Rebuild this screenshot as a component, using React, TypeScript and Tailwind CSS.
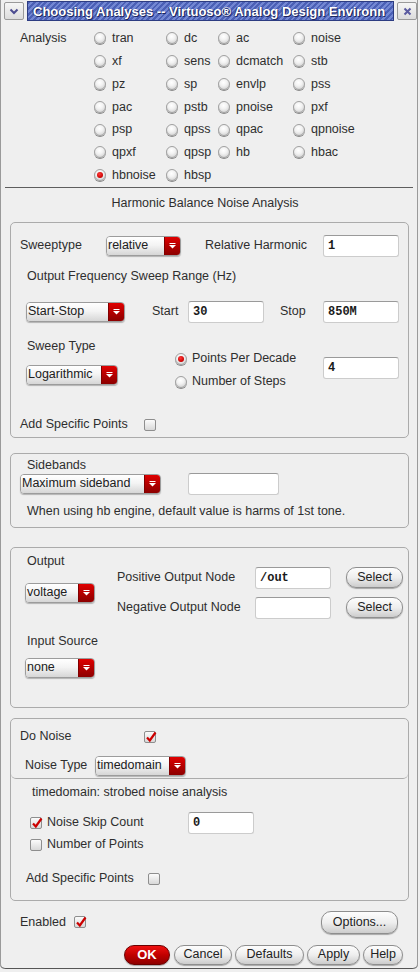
import React from "react";

const Radio = ({ checked = false }: { checked?: boolean }) => (
  <span className="relative inline-flex w-[12px] h-[12px] shrink-0 items-center justify-center rounded-full border border-[#a0a0a0] bg-[radial-gradient(circle_at_45%_35%,#ffffff_0%,#f2f2f2_40%,#c6c6c6_100%)] shadow-[0_1px_0_#8a8a8a]">
    {checked && (
      <span className="w-[6px] h-[6px] rounded-full bg-[radial-gradient(circle_at_40%_35%,#ff3a3a,#c80000_70%,#900000)]" />
    )}
  </span>
);

const Check = ({ checked = false }: { checked?: boolean }) => (
  <span className="relative inline-block w-[12px] h-[12px] shrink-0 border border-[#8e8e8e] rounded-[2px] bg-[linear-gradient(#fbfbfb,#d8d8d8)]">
    {checked && (
      <svg className="absolute left-[0px] top-[-2px]" width="12" height="13" viewBox="0 0 12 13">
        <path d="M2 7.5 L4.8 10.5 L10.5 2.5" stroke="#cc0000" strokeWidth="2.2" fill="none" />
      </svg>
    )}
  </span>
);

const Dropdown = ({ label, w }: { label: string; w: string }) => (
  <div className={`${w} h-[20px] shrink-0 flex rounded-[4px] border border-[#9c9c9c] overflow-hidden shadow-[0_1px_1px_rgba(0,0,0,0.25)]`}>
    <div className="flex-1 flex items-center pl-[1px] bg-[linear-gradient(#ffffff,#f4f4f4_45%,#d6d6d6)] text-[#202020] whitespace-nowrap overflow-hidden">
      {label}
    </div>
    <div className="w-[16px] flex items-center justify-center bg-[linear-gradient(#e00000,#b00000_55%,#8c0000)] border-l border-[#800000]">
      <svg width="7" height="6" viewBox="0 0 7 6">
        <path d="M0.5 0.5h6" stroke="#fff" strokeWidth="1" />
        <path d="M0 2h7L3.5 5.5z" fill="#fff" />
      </svg>
    </div>
  </div>
);

const Field = ({ value = "", w }: { value?: string; w: string }) => (
  <div className={`${w} h-[22px] shrink-0 bg-white border border-[#cccccc] border-t-[#9a9a9a] rounded-[3px] flex items-center pl-[4px] font-['Liberation_Mono',monospace] font-bold text-[12px] text-[#1a1a1a]`}>
    {value}
  </div>
);

const Btn = ({ label, w, h = "h-[21px]" }: { label: string; w: string; h?: string }) => (
  <div className={`${w} ${h} shrink-0 flex items-center justify-center rounded-[10px] border border-[#8e8e8e] bg-[linear-gradient(#fdfdfd,#eeeeee_50%,#cccccc)] shadow-[0_1px_1px_rgba(0,0,0,0.3)] text-[#222]`}>
    {label}
  </div>
);

const rows: [string, boolean][][] = [
  [["tran", false], ["dc", false], ["ac", false], ["noise", false]],
  [["xf", false], ["sens", false], ["dcmatch", false], ["stb", false]],
  [["pz", false], ["sp", false], ["envlp", false], ["pss", false]],
  [["pac", false], ["pstb", false], ["pnoise", false], ["pxf", false]],
  [["psp", false], ["qpss", false], ["qpac", false], ["qpnoise", false]],
  [["qpxf", false], ["qpsp", false], ["hb", false], ["hbac", false]],
  [["hbnoise", true], ["hbsp", false]],
];

export default function App() {
  return (
    <div className="w-[420px] h-[972px] bg-[#efefef] font-['Liberation_Sans',Arial,sans-serif] text-[12.5px] text-[#2e2e2e] leading-none">
      <div className="w-[418px] h-[969px] flex flex-col rounded-b-[5px] shadow-[inset_1px_0_0_#9a9a9a,inset_-1px_0_0_#9a9a9a,inset_0_-1px_0_#555555]">
        {/* Title bar */}
        <div className="h-[22px] flex items-start pt-[1px]">
          <div className="ml-[4px] mt-[1px] w-[20px] h-[18px] flex items-center justify-center rounded-[2px] border border-[#9a9a9a] bg-[linear-gradient(#f6f6f6,#dcdcdc)]">
            <svg width="10" height="7" viewBox="0 0 10 7">
              <path d="M1.5 1.5 L5 5 L8.5 1.5" stroke="#4c4c90" strokeWidth="2" fill="none" />
            </svg>
          </div>
          <div className="ml-[3px] w-[367px] h-[20px] border border-[#2d3c82] bg-[repeating-linear-gradient(135deg,#4b60b6_0px,#4b60b6_2px,#7387d3_2px,#7387d3_4px)] flex items-center pl-[5px] overflow-hidden">
            <span className="text-white font-bold text-[13px] whitespace-nowrap [text-shadow:1px_1px_0_#1c2660,-1px_0_0_#2a3a80]">
              Choosing Analyses -- Virtuoso® Analog Design Environn
            </span>
          </div>
          <div className="ml-[3px] mt-[1px] w-[20px] h-[18px] flex items-center justify-center rounded-[2px] border border-[#9a9a9a] bg-[linear-gradient(#f6f6f6,#dcdcdc)]">
            <svg width="9" height="9" viewBox="0 0 9 9">
              <path d="M1.5 1.5 L7.5 7.5 M7.5 1.5 L1.5 7.5" stroke="#5a5aa0" strokeWidth="2" />
            </svg>
          </div>
        </div>

        {/* Analysis */}
        <div className="pt-[5px] flex">
          <div className="w-[94px] pl-[20px] h-[22.8px] flex items-center">Analysis</div>
          <div className="grid grid-cols-[72px_52px_75px_1fr] auto-rows-[22.8px]">
            {rows.flat().map(([name, checked]) => (
              <div key={name} className="flex items-center gap-[6px]">
                <Radio checked={checked} />
                <span>{name}</span>
              </div>
            ))}
          </div>
        </div>

        <div className="mx-[5px] h-[1px] bg-[#5e5e5e]" />

        <div className="mt-[8px] h-[16px] flex items-center justify-center pr-[8px]">Harmonic Balance Noise Analysis</div>

        {/* Box 1 */}
        <div className="mt-[10px] ml-[10px] w-[399px] h-[216px] border border-[#ababab] rounded-[5px] flex flex-col">
          <div className="mt-[12px] h-[22px] flex items-center">
            <div className="w-[95px] pl-[9px]">Sweeptype</div>
            <Dropdown label="relative" w="w-[75px]" />
            <div className="w-[142px] pl-[24px]">Relative Harmonic</div>
            <Field value="1" w="w-[76px]" />
          </div>
          <div className="mt-[12px] h-[16px] flex items-center pl-[16px]">Output Frequency Sweep Range (Hz)</div>
          <div className="mt-[16px] h-[22px] flex items-center">
            <div className="w-[15px]" />
            <Dropdown label="Start-Stop" w="w-[99px]" />
            <div className="w-[63px] pl-[27px]">Start</div>
            <Field value="30" w="w-[76px]" />
            <div className="w-[59px] pl-[16px]">Stop</div>
            <Field value="850M" w="w-[76px]" />
          </div>
          <div className="mt-[16px] flex items-start">
            <div className="w-[164px] pl-[15px] flex flex-col">
              <div className="h-[16px] flex items-center pl-[1px]">Sweep Type</div>
              <div className="mt-[10px]">
                <Dropdown label="Logarithmic" w="w-[92px]" />
              </div>
            </div>
            <div className="w-[148px] flex flex-col">
              <div className="mt-[9px] h-[22px] flex items-center gap-[5px]">
                <Radio checked />
                <span>Points Per Decade</span>
              </div>
              <div className="h-[24px] flex items-center gap-[5px]">
                <Radio />
                <span>Number of Steps</span>
              </div>
            </div>
            <div className="mt-[18px]">
              <Field value="4" w="w-[76px]" />
            </div>
          </div>
          <div className="mt-[23px] h-[16px] flex items-center">
            <div className="w-[133px] pl-[9px]">Add Specific Points</div>
            <Check />
          </div>
        </div>

        {/* Box 2 */}
        <div className="mt-[15px] ml-[10px] w-[399px] h-[75px] border border-[#ababab] rounded-[5px] flex flex-col">
          <div className="mt-[5px] h-[14px] flex items-center pl-[16px]">Sidebands</div>
          <div className="h-[22px] flex items-center">
            <div className="w-[9px]" />
            <Dropdown label="Maximum sideband" w="w-[141px]" />
            <div className="ml-[27px]">
              <Field w="w-[91px]" />
            </div>
          </div>
          <div className="mt-[9px] h-[16px] flex items-center pl-[16px]">
            When using hb engine, default value is harms of 1st tone.
          </div>
        </div>

        {/* Box 3 */}
        <div className="mt-[19px] ml-[10px] w-[399px] h-[161px] border border-[#ababab] rounded-[5px] flex">
          <div className="w-[106px] pl-[14px] flex flex-col">
            <div className="mt-[6px] h-[16px] flex items-center pl-[2px]">Output</div>
            <div className="mt-[13px]">
              <Dropdown label="voltage" w="w-[70px]" />
            </div>
            <div className="mt-[31px] h-[16px] flex items-center pl-[2px]">Input Source</div>
            <div className="mt-[8px]">
              <Dropdown label="none" w="w-[70px]" />
            </div>
          </div>
          <div className="mt-[19px] flex flex-col">
            <div className="h-[22px] flex items-center">
              <div className="w-[138px]">Positive Output Node</div>
              <Field value="/out" w="w-[76px]" />
              <div className="ml-[15px]">
                <Btn label="Select" w="w-[57px]" />
              </div>
            </div>
            <div className="mt-[8px] h-[22px] flex items-center">
              <div className="w-[138px]">Negative Output Node</div>
              <Field w="w-[76px]" />
              <div className="ml-[15px]">
                <Btn label="Select" w="w-[57px]" />
              </div>
            </div>
          </div>
        </div>

        {/* Box 4 */}
        <div className="mt-[10px] ml-[10px] w-[399px] h-[183px] border border-[#ababab] rounded-[5px] flex flex-col">
          <div className="h-[60px] border-b border-[#ababab] rounded-b-[5px] flex flex-col">
            <div className="mt-[10px] h-[16px] flex items-center">
              <div className="w-[133px] pl-[9px]">Do Noise</div>
              <Check checked />
            </div>
            <div className="mt-[10px] h-[22px] flex items-center">
              <div className="w-[84px] pl-[14px]">Noise Type</div>
              <Dropdown label="timedomain" w="w-[91px]" />
            </div>
          </div>
          <div className="mt-[6px] h-[16px] flex items-center pl-[21px]">timedomain: strobed noise analysis</div>
          <div className="mt-[11px] h-[22px] flex items-center">
            <div className="w-[19px]" />
            <Check checked />
            <div className="w-[146px] pl-[5px]">Noise Skip Count</div>
            <Field value="0" w="w-[66px]" />
          </div>
          <div className="mt-[3px] h-[16px] flex items-center">
            <div className="w-[19px]" />
            <Check />
            <div className="pl-[5px]">Number of Points</div>
          </div>
          <div className="mt-[18px] h-[16px] flex items-center">
            <div className="w-[137px] pl-[15px]">Add Specific Points</div>
            <Check />
          </div>
        </div>

        {/* Enabled row */}
        <div className="mt-[10px] h-[23px] flex items-center">
          <div className="w-[74px] pl-[20px]">Enabled</div>
          <Check checked />
          <div className="ml-auto mr-[20px]">
            <Btn label="Options..." w="w-[77px]" h="h-[23px]" />
          </div>
        </div>

        {/* Bottom buttons */}
        <div className="mt-[11px] h-[20px] flex">
          <div className="ml-[124px] w-[46px] h-[20px] flex items-center justify-center rounded-[10px] border border-[#6a0000] bg-[linear-gradient(#f01010,#c00000_50%,#8e0000)] shadow-[0_1px_1px_rgba(0,0,0,0.3)] text-white font-bold text-[13px]">
            OK
          </div>
          <div className="ml-[4px]">
            <Btn label="Cancel" w="w-[58px]" h="h-[20px]" />
          </div>
          <div className="ml-[3px]">
            <Btn label="Defaults" w="w-[69px]" h="h-[20px]" />
          </div>
          <div className="ml-[3px]">
            <Btn label="Apply" w="w-[53px]" h="h-[20px]" />
          </div>
          <div className="ml-[3px]">
            <Btn label="Help" w="w-[40px]" h="h-[20px]" />
          </div>
        </div>
      </div>
    </div>
  );
}
